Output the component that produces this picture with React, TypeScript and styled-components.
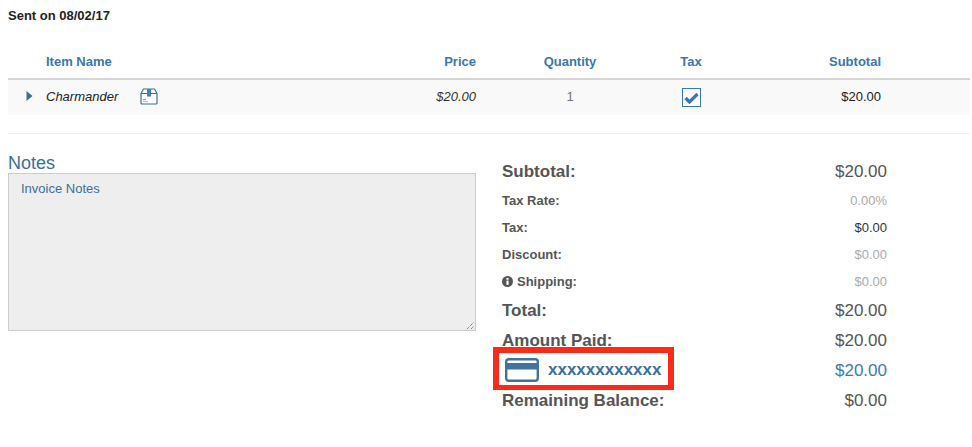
import React from "react";
import styled, { createGlobalStyle } from "styled-components";

const Global = createGlobalStyle`
  html, body { margin: 0; padding: 0; background: #fff; }
  body { font-family: "Liberation Sans", Arial, sans-serif; color: #333; }
`;

const Page = styled.div`
  width: 972px;
  height: 447px;
  overflow: hidden;
  padding: 8px 2px 0 8px;
  box-sizing: border-box;
`;

const SentOn = styled.div`
  font-size: 13px;
  font-weight: 700;
  line-height: 16px;
  color: #222;
`;

const TableGrid = styled.div`
  display: grid;
  grid-template-columns: 38px 88px 342px 188px 54px 163px 1fr;
  align-items: center;
`;

const HeadRow = styled(TableGrid)`
  margin-top: 24px;
  padding-bottom: 3px;
  height: 27px;
  border-bottom: 2px solid #d4d4d4;
  font-size: 13px;
  font-weight: 700;
  color: #3d76ad;
`;

const BodyRow = styled(TableGrid)`
  height: 35px;
  padding-bottom: 3px;
  box-sizing: border-box;
  background: #f9f9f9;
  font-size: 13px;
`;

const Cell = styled.div<{ $align?: string; $tone?: string; $italic?: boolean }>`
  text-align: ${(p) => p.$align || "left"};
  color: ${(p) => p.$tone || "inherit"};
  font-style: ${(p) => (p.$italic ? "italic" : "normal")};
`;

const ArrowCell = styled.div`
  display: flex;
  justify-content: flex-start;
  padding-left: 18px;
`;

const NameCell = styled.div`
  display: flex;
  align-items: center;
  grid-column: span 2;
  font-style: italic;
  color: #222;
  white-space: nowrap;
  justify-content: space-between;
`;

const NameGroup = styled.div`
  display: flex;
  align-items: center;
  gap: 22px;
`;

const CheckCell = styled.div`
  display: flex;
  justify-content: center;
  padding-top: 3px;
`;

const CheckBox = styled.div`
  width: 19px;
  height: 19px;
  border: 1px solid #337ab7;
  background: #fff;
  display: flex;
  align-items: center;
  justify-content: center;
  box-sizing: border-box;
`;

const Divider = styled.div`
  margin-top: 18px;
  height: 1px;
  background: #eeeeee;
`;

const Columns = styled.div`
  display: flex;
  margin-top: 22px;
`;

const NotesCol = styled.div`
  width: 468px;
`;

const NotesTitle = styled.div`
  font-size: 18px;
  line-height: 18px;
  color: #3a6f99;
  margin-top: -2px;
  padding-bottom: 1px;
`;

const NotesBox = styled.div`
  position: relative;
  box-sizing: border-box;
  height: 158px;
  background: #eeeeee;
  border: 1px solid #cccccc;
  padding: 7px 12px;
  font-size: 13px;
  line-height: 16px;
  color: #3a6f99;
`;

const Grip = styled.svg`
  position: absolute;
  right: 0;
  bottom: 0;
  display: block;
`;

const Summary = styled.div`
  width: 385px;
  margin-left: 26px;
  margin-top: 1px;
`;

const SumRow = styled.div<{ $h: number; $big?: boolean }>`
  display: flex;
  justify-content: space-between;
  align-items: center;
  height: ${(p) => p.$h}px;
  font-size: ${(p) => (p.$big ? 17 : 13)}px;
  font-weight: 700;
  color: #555;
`;

const Amount = styled.span<{ $tone?: string; $big?: boolean }>`
  font-weight: 400;
  font-size: ${(p) => (p.$big ? 17 : 13)}px;
  color: ${(p) => p.$tone || "#555"};
`;

const Label = styled.span`
  display: inline-flex;
  align-items: center;
  gap: 4px;
`;

const PaidRow = styled.div`
  display: flex;
  align-items: center;
  height: 30px;
`;

const PaidAmount = styled(Amount)`
  margin-left: auto;
`;

const CardHighlight = styled.div`
  box-sizing: border-box;
  display: flex;
  align-items: center;
  gap: 9px;
  width: 181px;
  height: 43px;
  margin: -9px 0 -4px -9px;
  padding: 2px 0 0 6px;
  border: 6px solid #fb2b1a;
  border-bottom-width: 5px;
  font-size: 17px;
  font-weight: 700;
  color: #3a7099;
  flex: none;
`;

export default function App() {
  return (
    <Page>
      <Global />
      <SentOn>Sent on 08/02/17</SentOn>
      <HeadRow>
        <span />
        <Cell>Item Name</Cell>
        <Cell $align="right">Price</Cell>
        <Cell $align="center">Quantity</Cell>
        <Cell $align="center">Tax</Cell>
        <Cell $align="right">Subtotal</Cell>
      </HeadRow>
      <BodyRow>
        <ArrowCell>
          <svg width="7" height="10" viewBox="0 0 7 10">
            <path d="M0.5 0 L6.5 5 L0.5 10 Z" fill="#3a7099" />
          </svg>
        </ArrowCell>
        <NameCell>
          <NameGroup>
            Charmander
            <svg width="18" height="17" viewBox="0 0 18 17">
              <path d="M1 5.5 L3.5 1 H14.5 L17 5.5 V15 Q17 16 16 16 H2 Q1 16 1 15 Z" fill="#fff" stroke="#3a7099" strokeWidth="1.2" />
              <path d="M1 5.5 H17" stroke="#3a7099" strokeWidth="1" />
              <rect x="7" y="1" width="4" height="7.5" fill="#3a86b8" />
              <rect x="3" y="11" width="3" height="1.2" fill="#8aa6bc" />
              <rect x="3" y="13" width="5" height="1.2" fill="#b5c7d5" />
            </svg>
          </NameGroup>
          <Cell $italic $tone="#333">$20.00</Cell>
        </NameCell>
        <Cell $align="center" $tone="#777">1</Cell>
        <CheckCell>
          <CheckBox>
            <svg width="15" height="12" viewBox="0 0 15 12">
              <path d="M1.5 6 L5.5 10 L13.5 2" fill="none" stroke="#3d76ad" strokeWidth="3.2" />
            </svg>
          </CheckBox>
        </CheckCell>
        <Cell $align="right" $tone="#222">$20.00</Cell>
      </BodyRow>
      <Divider />
      <Columns>
        <NotesCol>
          <NotesTitle>Notes</NotesTitle>
          <NotesBox>
            Invoice Notes
            <Grip width="9" height="9" viewBox="0 0 9 9">
              <path d="M1 8 L8 1 M5 8 L8 5" stroke="#555" strokeWidth="1" strokeDasharray="1 1" fill="none" />
            </Grip>
          </NotesBox>
        </NotesCol>
        <Summary>
          <SumRow $h={30} $big>
            <span>Subtotal:</span>
            <Amount $big>$20.00</Amount>
          </SumRow>
          <SumRow $h={27}>
            <span>Tax Rate:</span>
            <Amount $tone="#aaa">0.00%</Amount>
          </SumRow>
          <SumRow $h={27}>
            <span>Tax:</span>
            <Amount $tone="#333">$0.00</Amount>
          </SumRow>
          <SumRow $h={27}>
            <span>Discount:</span>
            <Amount $tone="#aaa">$0.00</Amount>
          </SumRow>
          <SumRow $h={27}>
            <Label>
              <svg width="11" height="11" viewBox="0 0 10 10">
                <circle cx="5" cy="5" r="5" fill="#555" />
                <rect x="4" y="4.2" width="2" height="3.8" fill="#fff" />
                <rect x="4" y="1.8" width="2" height="1.6" fill="#fff" />
              </svg>
              Shipping:
            </Label>
            <Amount $tone="#aaa">$0.00</Amount>
          </SumRow>
          <SumRow $h={31} $big>
            <span>Total:</span>
            <Amount $big>$20.00</Amount>
          </SumRow>
          <SumRow $h={30} $big>
            <span>Amount Paid:</span>
            <Amount $big>$20.00</Amount>
          </SumRow>
          <PaidRow>
            <CardHighlight>
              <svg width="34" height="24" viewBox="0 0 34 24">
                <rect x="1.2" y="1.2" width="31.6" height="21.6" rx="2.5" fill="#fff" stroke="#41739b" strokeWidth="2.4" />
                <rect x="1.2" y="5" width="31.6" height="6.5" fill="#41739b" />
              </svg>
              xxxxxxxxxxxx
            </CardHighlight>
            <PaidAmount $big $tone="#3a7ca8">$20.00</PaidAmount>
          </PaidRow>
          <SumRow $h={30} $big>
            <span>Remaining Balance:</span>
            <Amount $big>$0.00</Amount>
          </SumRow>
        </Summary>
      </Columns>
    </Page>
  );
}
